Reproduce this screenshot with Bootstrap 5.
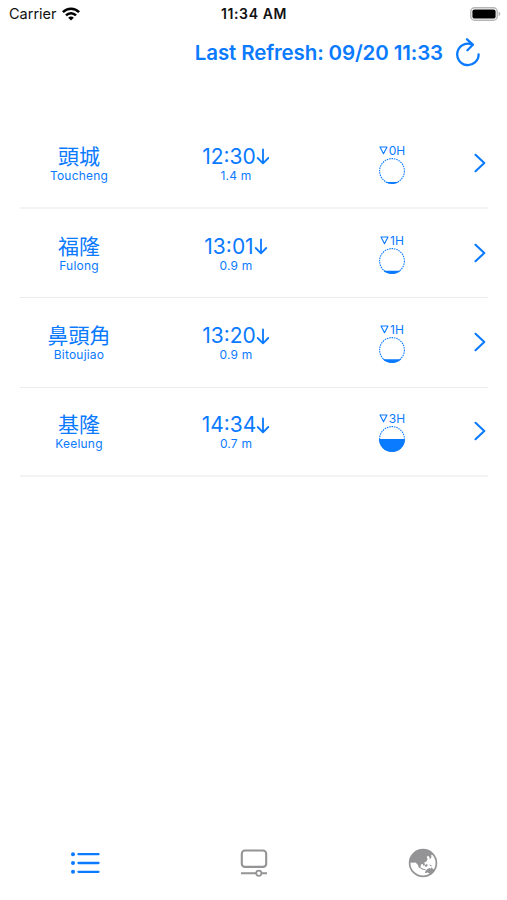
<!DOCTYPE html>
<html lang="zh-Hant">
<head>
<meta charset="utf-8">
<meta name="viewport" content="width=device-width, initial-scale=1">
<title>Tides</title>
<link href="https://cdn.jsdelivr.net/npm/bootstrap@5.3.0/dist/css/bootstrap.min.css" rel="stylesheet">
<style>
:root { --tint: #0a7aff; }
body { font-family: Inter, "Noto Sans CJK TC", sans-serif; background: #fff; height: 900px; overflow: hidden; }
svg { display: block; flex: none; }
.tint { color: var(--tint); }
.status { height: 28px; color: #111; padding: 0 6px 0 9px; font-size: 14.5px; line-height: 28px; }
.status > div { flex: 1 1 0; }
.carrier { gap: 5px; }
.clock { font-weight: 600; font-size: 14px; letter-spacing: .6px; margin-right: 2px; }
.refresh { height: 50px; padding: 1px 26px 0 0; gap: 12px; font-weight: 600; font-size: 20.5px; letter-spacing: -.13px; }
.refresh svg { margin-top: -2px; }
.stations { margin: 41px 19px 0 20px; }
.station { height: 89.5px; border-bottom: 1px solid #ececee; }
.station:first-child, .station:last-child { border-bottom: 2px solid #f3f3f4; }
.c-name { width: 118px; padding-top: 3px; }
.c-tide { width: 196px; padding-top: 3px; }
.c-moon { width: 116px; padding-top: 3px; }
.big { font-size: 21px; line-height: 22px; white-space: nowrap; }
.sub { font-size: 12px; line-height: 15px; letter-spacing: .2px; }
.hours { font-size: 12px; line-height: 13px; gap: 1px; }
.tabs { height: 74px; color: #949496; }
</style>
</head>
<body class="d-flex flex-column">
<header class="status d-flex align-items-center">
  <div class="carrier d-flex align-items-center"><span>Carrier</span>
    <svg width="18" height="14" viewBox="0 0 18 14" fill="none" stroke="#000" stroke-width="2.5"><path d="M.9 5.1C5.3.5 12.7.5 17.1 5.1M4 8.3c2.8-2.9 7.2-2.9 10 0"/><path d="M9 13.5 6.2 10.7c1.5-1.5 4.1-1.5 5.6 0z" fill="#000" stroke="none"/></svg>
  </div>
  <span class="clock">11:34 AM</span>
  <div class="d-flex justify-content-end">
    <svg width="31" height="14" viewBox="0 0 31 14"><rect x=".8" y=".8" width="26.4" height="12.4" rx="3.8" fill="#fff" stroke="#b5b5b5" stroke-width="1.4"/><rect x="2.4" y="2.4" width="23.2" height="9.2" rx="2.2"/><path d="M28.6 4.8c2.2.6 2.2 3.8 0 4.4z" fill="#b5b5b5"/></svg>
  </div>
</header>
<div class="refresh tint d-flex justify-content-end align-items-center">
  <span>Last Refresh: 09/20 11:33</span>
  <svg width="26" height="30" viewBox="0 0 26 30" fill="none" stroke="currentColor" stroke-width="2.3" stroke-linecap="round" stroke-linejoin="round"><path d="M23.6 16.3A10.7 10.7 0 1 1 17.2 6.6M12 1.3l5.9 5.4-5.500 5.500"/></svg>
</div>
<main class="stations tint"></main>
<nav class="tabs mt-auto row g-0 align-items-center">
  <div class="col d-flex justify-content-center tint"><svg width="30" height="22" viewBox="0 0 30 22" fill="none" stroke="currentColor" stroke-width="2.3" stroke-linecap="round"><path d="M8.5 2.2h20M8.5 11h20M8.5 19.8h20"/><g fill="currentColor" stroke="none"><circle cx="3" cy="2.2" r="2"/><circle cx="3" cy="11" r="2"/><circle cx="3" cy="19.8" r="2"/></g></svg></div>
  <div class="col d-flex justify-content-center"><svg width="28" height="28" viewBox="0 0 28 28" fill="none" stroke="currentColor" stroke-width="2.1"><rect x="1.8" y="1.5" width="24.4" height="16.4" rx="3.2"/><path d="M1 24.3h15M21.6 24.3H27"/><circle cx="18.8" cy="24.3" r="2.6" stroke-width="1.7"/></svg></div>
  <div class="col d-flex justify-content-center"><svg width="30" height="30" viewBox="0 0 30 30"><circle cx="15" cy="15" r="13.4" fill="#fff" stroke="currentColor" stroke-width="1.7"/><path fill="currentColor" d="M1.600 14.500l3 .3 2.900-.4 2.300 2.400 1.300 3.400 1.500-.9.300-2.600 1.500-1 1.400 2.200 1.200-.9-.7-2.500 2.300-1.200 1-2.300-1-2 1.600-1.200 1.300 1.500.2 2.100 1.700-1.900-.2-2.400 2.300-.8A13.400 13.400 0 0 0 1.600 14.500zM12.500 19.300l2.400 1.500 2.400.1.200 1.100-2.800-.2-2.500-1.500zM17.300 16.700l1.900-.8.500 1.700-1.400 1.300-1.500-.6zM21 16.500l1.800.6 1.700 1.200-2.200-.2zM17.500 22.700l2.200-1.900 2-.7 1 .7.900-1.600 1.300 1.900 2.100.5c-1 2.500-2.700 4.500-5 5.700l-.7-2-1.800-.7-2.600.7z"/></svg></div>
</nav>
<script>
const stations = [
  ["頭城", "Toucheng", "12:30", "1.4 m", "0H", 24.9],
  ["福隆", "Fulong", "13:01", "0.9 m", "1H", 23.7],
  ["鼻頭角", "Bitoujiao", "13:20", "0.9 m", "1H", 23.2],
  ["基隆", "Keelung", "14:34", "0.7 m", "3H", 14]
];
document.querySelector(".stations").innerHTML = stations.map(([zh, en, time, height, hours, level], i) => `
  <div class="station d-flex align-items-center">
    <div class="c-name text-center"><div class="big">${zh}</div><div class="sub">${en}</div></div>
    <div class="c-tide d-flex flex-column align-items-center">
      <div class="big d-flex align-items-center"><span>${time}</span><svg width="14" height="17" viewBox="0 0 14 17" fill="none" stroke="currentColor" stroke-width="1.8" stroke-linecap="round" stroke-linejoin="round"><path d="M7 1.3v13.9M1.7 10 7 15.3l5.3-5.3"/></svg></div>
      <div class="sub">${height}</div>
    </div>
    <div class="c-moon d-flex flex-column align-items-center">
      <div class="hours d-flex align-items-center"><svg width="9" height="9" viewBox="0 0 9 9" fill="none" stroke="currentColor" stroke-width="1.1" stroke-linejoin="round"><path d="M1 1h7L4.5 7.8z"/></svg><span>${hours}</span></div>
      <svg width="28" height="28" viewBox="0 0 28 28"><clipPath id="fill${i}"><rect y="${level}" width="28" height="28"/></clipPath><circle cx="14" cy="14" r="12.4" fill="none" stroke="currentColor" stroke-width="1.1" stroke-dasharray="1.5 .9"/><circle cx="14" cy="14" r="13" fill="currentColor" clip-path="url(#fill${i})"/></svg>
    </div>
    <svg class="ms-auto" width="14" height="20" viewBox="0 0 14 20" fill="none" stroke="currentColor" stroke-width="2.1" stroke-linecap="round" stroke-linejoin="round"><path d="M1.5 1.8 10.3 10l-8.8 8.2"/></svg>
  </div>`).join("");
</script>
<script src="https://cdn.jsdelivr.net/npm/bootstrap@5.3.0/dist/js/bootstrap.bundle.min.js"></script>
</body>
</html>
